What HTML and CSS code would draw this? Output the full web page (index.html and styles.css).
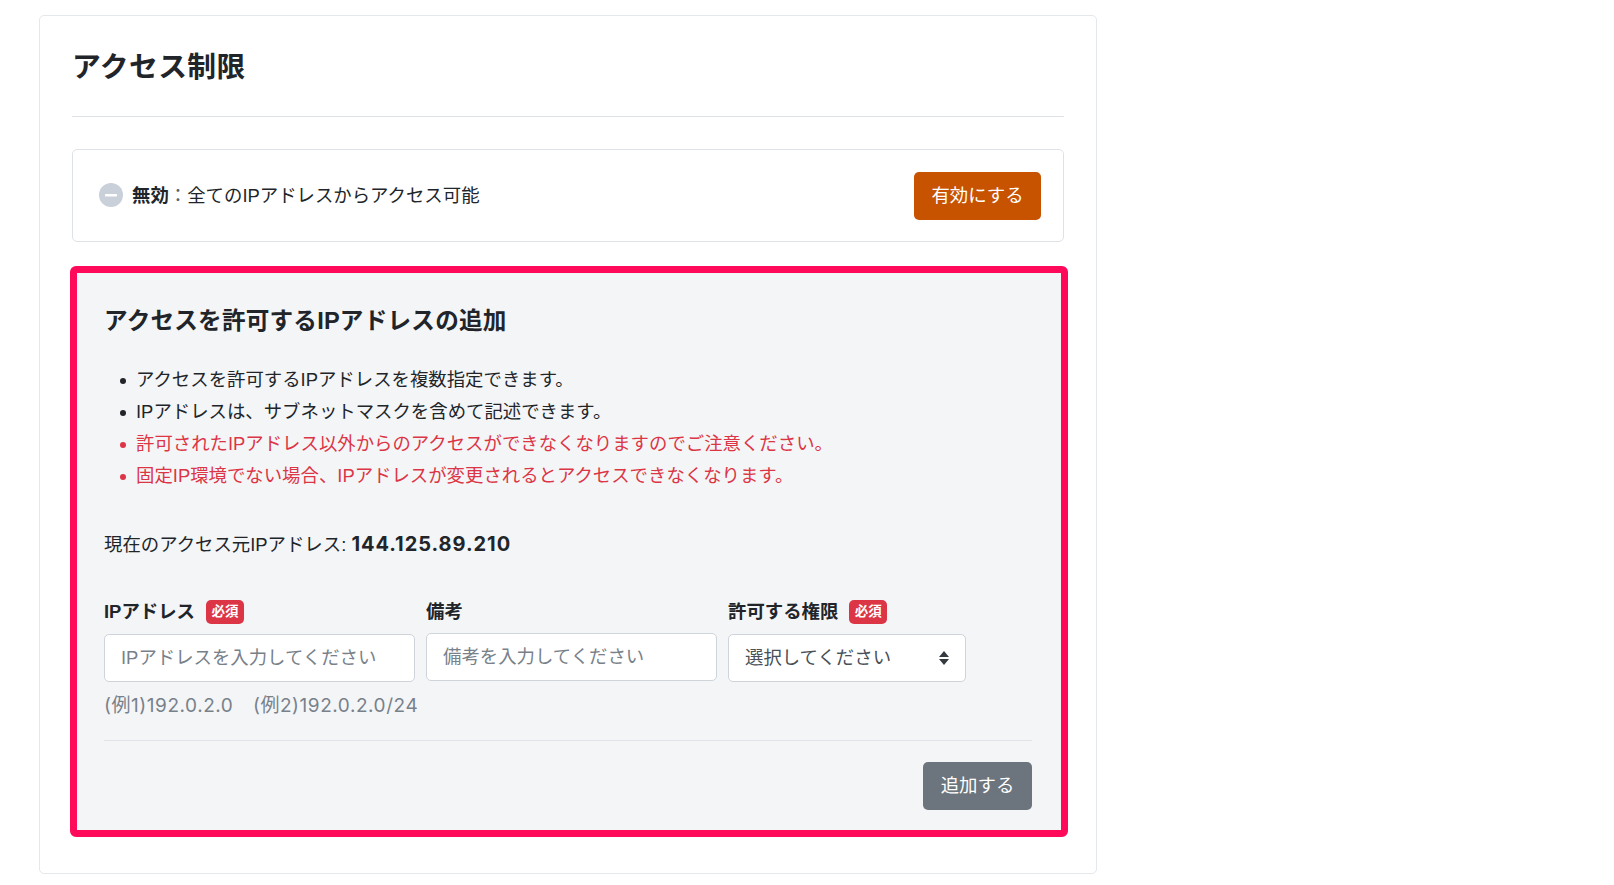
FILE: index.html
```
<!DOCTYPE html>
<html lang="ja">
<head>
<meta charset="utf-8">
<title>アクセス制限</title>
<link rel="stylesheet" href="styles.css">
</head>
<body>
<main class="card">
  <h1 class="card-title">アクセス制限</h1>
  <section class="status">
    <svg class="status-icon" viewBox="0 0 24 24"><circle cx="12" cy="12" r="12" fill="#c9d0d9"/><rect x="6" y="11" width="12" height="2.4" rx=".6" fill="#fff"/></svg>
    <p class="status-text"><b>無効</b><span class="colon">：</span>全てのIPアドレスからアクセス可能</p>
    <button class="btn btn-primary">有効にする</button>
  </section>
  <section class="panel">
    <h2 class="panel-title">アクセスを許可するIPアドレスの追加</h2>
    <ul class="notes">
      <li><span>アクセスを許可するIPアドレスを複数指定できます。</span></li>
      <li><span>IPアドレスは、サブネットマスクを含めて記述できます。</span></li>
      <li class="danger"><span>許可されたIPアドレス以外からのアクセスができなくなりますのでご注意ください。</span></li>
      <li class="danger"><span>固定IP環境でない場合、IPアドレスが変更されるとアクセスできなくなります。</span></li>
    </ul>
    <p class="current">現在のアクセス元IPアドレス: <b class="ip">144.125.89.210</b></p>
    <div class="fields">
      <div class="field field-ip">
        <div class="label">IPアドレス<span class="badge">必須</span></div>
        <div class="control placeholder">IPアドレスを入力してください</div>
        <p class="help">(例1)192.0.2.0　(例2)192.0.2.0/24</p>
      </div>
      <div class="field field-memo">
        <div class="label label-plain">備考</div>
        <div class="control placeholder">備考を入力してください</div>
      </div>
      <div class="field field-role">
        <div class="label">許可する権限<span class="badge">必須</span></div>
        <div class="control select">選択してください
          <svg class="arrows" viewBox="0 0 10 14"><path d="M5 0 10 6H0zM5 14 10 8H0z" fill="#343a40"/></svg>
        </div>
      </div>
    </div>
    <div class="actions"><button class="btn btn-secondary">追加する</button></div>
  </section>
</main>
</body>
</html>
```
FILE: styles.css
```
* { box-sizing: border-box; }
body {
  margin: 0;
  padding: 15px 0 0 39px;
  background: #fff;
  color: #212529;
  font: 18.4px/32px "Liberation Sans", "Noto Sans CJK JP", sans-serif;
}
h1, h2, p, ul { margin: 0; padding: 0; }
.card {
  width: 1058px;
  height: 859px;
  padding: 0 32px;
  border: 1.5px solid #e4e7eb;
  border-radius: 5px;
}
.card-title {
  height: 101px;
  border-bottom: 1px solid #dee2e6;
  font-size: 28.8px;
  line-height: 102px;
  letter-spacing: .4px;
}
.status {
  display: flex;
  align-items: center;
  height: 93px;
  margin: 32px 0 24px;
  padding: 0 22px 0 26px;
  border: 1px solid #dee2e6;
  border-radius: 5px;
}
.status-icon { width: 24px; height: 24px; margin: 0 9px 1px 0; }
.status-text { flex: 1; }
.colon { color: #5a5f64; }
.btn {
  height: 48px;
  padding: 0;
  border: 0;
  border-radius: 5px;
  color: #fff;
  font: inherit;
}
.btn-primary { width: 127px; background: #c75300; }
.btn-secondary { width: 109px; background: #6c757d; }
.panel {
  height: 571px;
  margin: 0 -4px 0 -2px;
  padding: 30px 29px 0 27px;
  border: 7px solid #ff0a5a;
  border-radius: 6px;
  background: #f4f5f7;
}
.panel-title { font-size: 23.6px; line-height: 36px; letter-spacing: .22px; }
.notes {
  margin-top: 25px;
  padding-left: 16px;
  list-style: none;
  line-height: 31.9px;
}
.notes li { display: flex; align-items: center; gap: 11px; white-space: nowrap; }
.notes li::before {
  width: 6px;
  height: 6px;
  margin-top: 3px;
  margin-right: -1px;
  border-radius: 50%;
  background: currentColor;
  content: "";
}
.danger { color: #dc3545; }
.current { margin-top: 37px; }
.ip { font: 700 20px/1 Inter, sans-serif; letter-spacing: .96px; }
.fields { display: flex; gap: 11px; margin-top: 39px; }
.field-ip { width: 311px; }
.field-memo { width: 291px; }
.field-role { width: 238px; }
.label { display: flex; align-items: center; height: 24px; margin-bottom: 10px; font-weight: 700; }
.label-plain { margin-bottom: 9px; }
.badge {
  width: 38px;
  height: 24px;
  margin-left: 11px;
  border-radius: 5px;
  background: #dc3545;
  color: #fff;
  font-size: 13.5px;
  line-height: 24px;
  text-align: center;
}
.control {
  display: flex;
  align-items: center;
  height: 48px;
  padding: 0 16px;
  border: 1px solid #ced4da;
  border-radius: 5px;
  background: #fff;
  white-space: nowrap;
}
.placeholder { color: #78818a; }
.select { justify-content: space-between; color: #495057; }
.arrows { width: 10px; height: 14px; }
.help {
  margin-top: 8px;
  color: #78818a;
  font-family: Inter, "Noto Sans CJK JP", sans-serif;
  font-size: 19px;
  letter-spacing: .55px;
  white-space: nowrap;
}
.actions {
  display: flex;
  justify-content: flex-end;
  margin-top: 18px;
  padding-top: 21px;
  border-top: 1px solid #e0e3e8;
}
```
